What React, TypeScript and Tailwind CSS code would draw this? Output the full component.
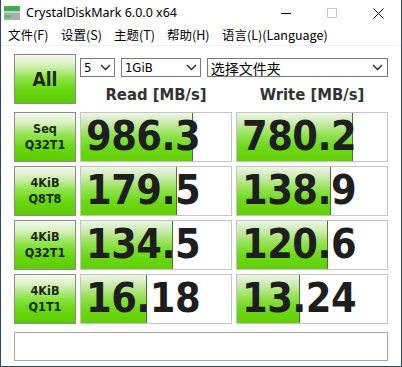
import React from "react";

const rows = [
  { l1: "Seq", l2: "Q32T1", r: "986.3", w: "780.2", rf: 112, wf: 116 },
  { l1: "4KiB", l2: "Q8T8", r: "179.5", w: "138.9", rf: 96, wf: 94 },
  { l1: "4KiB", l2: "Q32T1", r: "134.5", w: "120.6", rf: 92, wf: 91 },
  { l1: "4KiB", l2: "Q1T1", r: "16.18", w: "13.24", rf: 66, wf: 63 },
];

const btnBg =
  "bg-[linear-gradient(to_bottom,#f4faf0_0%,#d4f0b8_22%,#8ee446_48%,#6ad812_70%,#5ccc00_100%)]";
const fillBg =
  "bg-[linear-gradient(to_bottom,#eef6ea_0%,#c8eaa8_22%,#8ee24a_48%,#6cd818_72%,#62d000_100%)]";

function Chevron() {
  return (
    <svg width="11" height="7" viewBox="0 0 11 7" fill="none">
      <path d="M1 1 L5.5 5.5 L10 1" stroke="#222" strokeWidth="1.3" />
    </svg>
  );
}

function Result({ value, fill }: { value: string; fill: number }) {
  return (
    <div className="relative w-[152px] h-[50px] border border-[#c4c4c4] bg-white overflow-hidden">
      <div
        className={`absolute left-0 top-0 bottom-0 ${fillBg} border-r border-[#4e6e3a]`}
        style={{ width: fill }}
      />
      <div className="relative h-full flex items-center pl-[5px] text-[41px] font-bold text-[#1e1e1e] leading-none font-['DejaVu_Sans_Condensed','DejaVu_Sans',sans-serif] tracking-[-0.5px]">
        {value}
      </div>
    </div>
  );
}

function TestBtn({ children, big }: { children: React.ReactNode; big?: boolean }) {
  return (
    <div
      className={`w-[62px] h-[50px] border border-[#8c8c8c] ${btnBg} flex flex-col items-center justify-center text-[#1c2a14] font-bold font-['DejaVu_Sans_Condensed','DejaVu_Sans',sans-serif] ${
        big ? "text-[19px]" : "text-[12.5px] leading-[16px]"
      }`}
    >
      {children}
    </div>
  );
}

export default function App() {
  return (
    <div className="w-[402px] h-[367px] bg-white border-x border-b border-[#2b4a60] flex flex-col overflow-hidden font-['Noto_Sans','Noto_Sans_CJK_SC',sans-serif]">
      {/* Title bar */}
      <div className="h-[26px] flex items-center shrink-0">
        <svg width="16" height="16" viewBox="0 0 16 16" className="ml-[3px] mr-[6px]">
          <rect x="0" y="1" width="16" height="5" fill="#38b24a" />
          <rect x="0" y="6" width="16" height="9" fill="#a8aeb2" />
          <rect x="0" y="6" width="16" height="2" fill="#c8ccd0" />
          <rect x="1" y="10" width="6" height="3" fill="#4cc85a" />
        </svg>
        <span className="text-[12.5px] text-black">CrystalDiskMark 6.0.0 x64</span>
        <div className="ml-auto flex items-center h-full">
          <div className="w-[46px] h-full flex items-center justify-center">
            <div className="w-[10px] h-px bg-black" />
          </div>
          <div className="w-[46px] h-full flex items-center justify-center">
            <div className="w-[10px] h-[10px] border border-[#c8c8c8]" />
          </div>
          <div className="w-[46px] h-full flex items-center justify-center">
            <svg width="11" height="11" viewBox="0 0 11 11">
              <path d="M0.5 0.5 L10.5 10.5 M10.5 0.5 L0.5 10.5" stroke="#111" strokeWidth="1" />
            </svg>
          </div>
        </div>
      </div>
      {/* Menu */}
      <div className="h-[19px] flex items-center text-[12.5px] text-black shrink-0 pl-[7px] font-['Noto_Sans_CJK_SC',sans-serif]">
        <span className="w-[53px]">文件(F)</span>
        <span className="w-[53px]">设置(S)</span>
        <span className="w-[53px]">主题(T)</span>
        <span className="w-[55px]">帮助(H)</span>
        <span>语言(L)(Language)</span>
      </div>
      <div className="h-px bg-[#f0f0f0] shrink-0" />
      {/* Content */}
      <div className="pl-[13px] pt-[8px] flex flex-col gap-[4px]">
        <div className="flex gap-[4px]">
          <TestBtn big>All</TestBtn>
          <div className="flex flex-col w-[308px]">
            <div className="flex gap-[6px] mt-[4px] h-[19px] text-[13px] text-black">
              <div className="w-[35px] border border-[#7a7a7a] flex items-center justify-between pl-[3px] pr-[3px] font-['DejaVu_Sans_Condensed','DejaVu_Sans',sans-serif]">
                <span>5</span>
                <Chevron />
              </div>
              <div className="w-[80px] border border-[#7a7a7a] flex items-center justify-between pl-[3px] pr-[3px] font-['DejaVu_Sans_Condensed','DejaVu_Sans',sans-serif]">
                <span>1GiB</span>
                <Chevron />
              </div>
              <div className="w-[182px] border border-[#7a7a7a] flex items-center justify-between pl-[3px] pr-[4px] font-['Noto_Sans_CJK_SC',sans-serif] text-[14px]">
                <span className="leading-none">选择文件夹</span>
                <Chevron />
              </div>
            </div>
            <div className="flex gap-[4px] mt-[6px] text-[16.5px] font-bold text-[#333] font-['DejaVu_Sans_Condensed','DejaVu_Sans',sans-serif]">
              <div className="w-[152px] text-center">Read [MB/s]</div>
              <div className="w-[152px] text-center">Write [MB/s]</div>
            </div>
          </div>
        </div>
        {rows.map((r, i) => (
          <div key={i} className="flex gap-[4px]">
            <TestBtn>
              <span>{r.l1}</span>
              <span>{r.l2}</span>
            </TestBtn>
            <Result value={r.r} fill={r.rf} />
            <Result value={r.w} fill={r.wf} />
          </div>
        ))}
        <div className="mt-[4px] w-[374px] h-[29px] border border-[#a8a8a8] bg-white" />
      </div>
    </div>
  );
}
